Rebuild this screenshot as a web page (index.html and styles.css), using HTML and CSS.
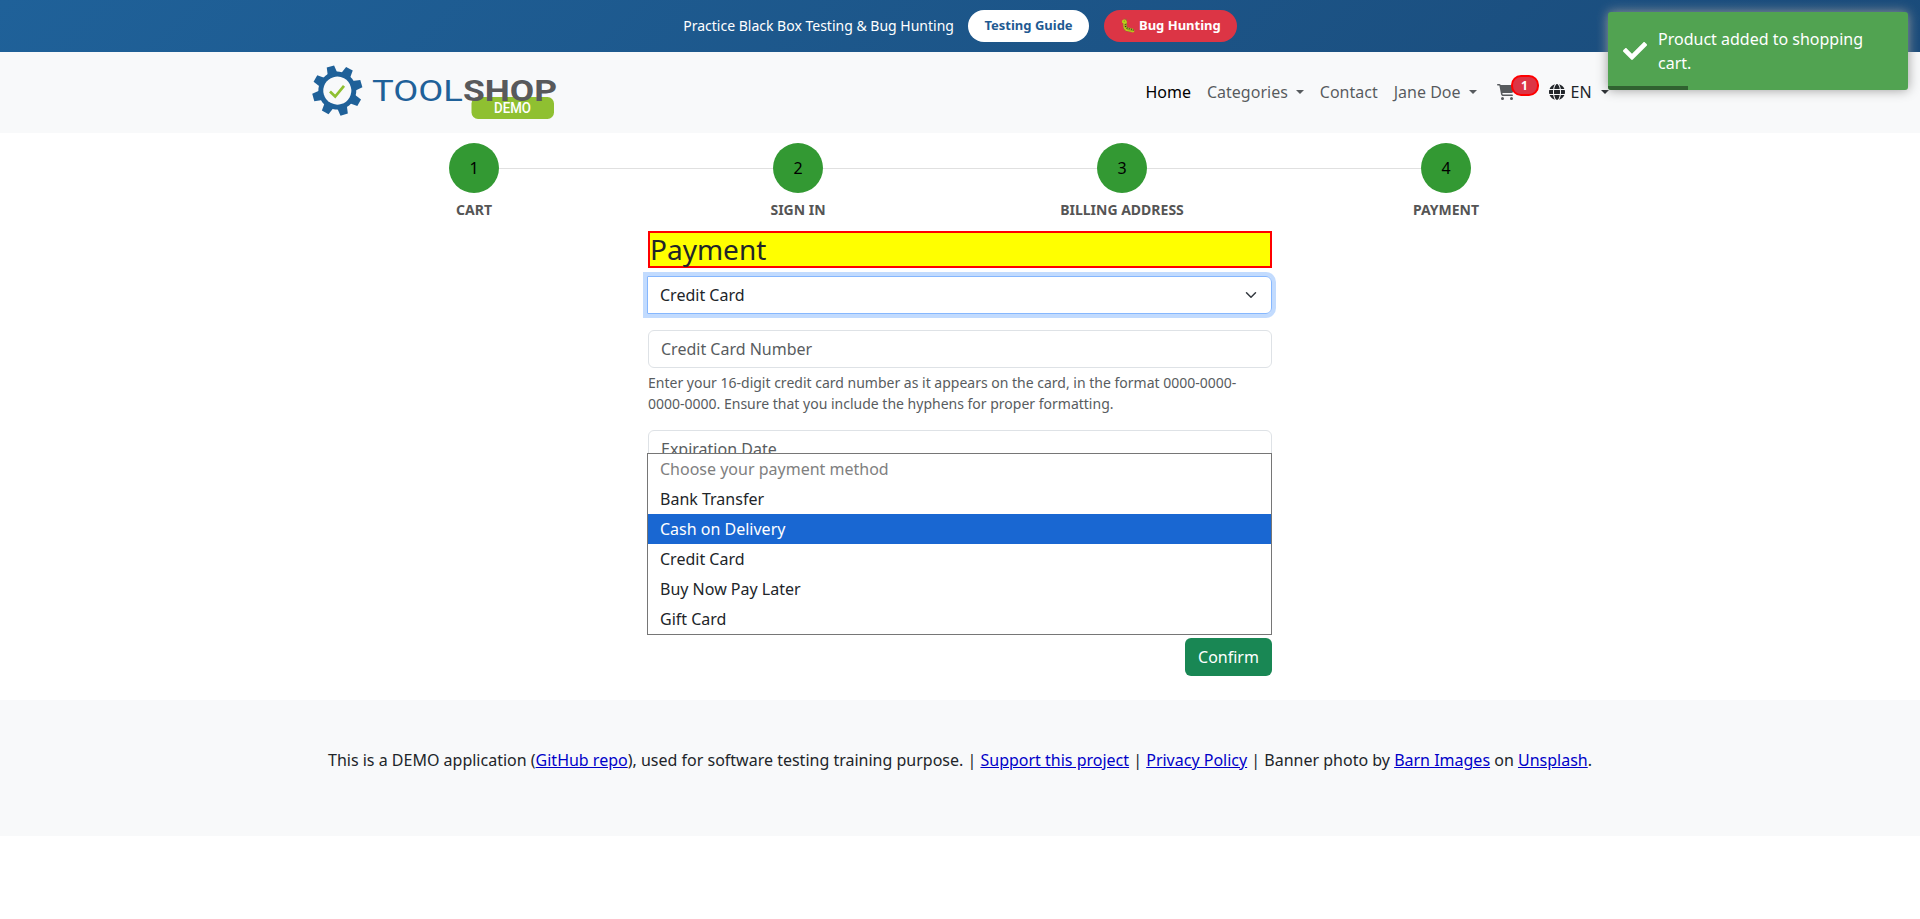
FILE: index.html
```html
<!DOCTYPE html>
<html lang="en">
<head>
<meta charset="utf-8">
<title>Toolshop - Payment</title>
<link rel="stylesheet" href="styles.css">
</head>
<body>
<div class="promo">
  <span>Practice Black Box Testing &amp; Bug Hunting</span>
  <a class="pill pill-light">Testing Guide</a>
  <a class="pill pill-red">🐛 Bug Hunting</a>
</div>

<header class="navbar">
  <div class="container nav-row">
    <svg class="logo" width="246" height="57" viewBox="0 0 246 57">
      <g transform="translate(25.300 26.600) rotate(-16)">
        <g fill="#1f6199">
          <circle r="19"/>
          <path d="M-5-17L-3.800-25H3.800L5-17Z"/>
          <path d="M-5-17L-3.800-25H3.800L5-17Z" transform="rotate(45)"/>
          <path d="M-5-17L-3.800-25H3.800L5-17Z" transform="rotate(90)"/>
          <path d="M-5-17L-3.800-25H3.800L5-17Z" transform="rotate(135)"/>
          <path d="M-5-17L-3.800-25H3.800L5-17Z" transform="rotate(180)"/>
          <path d="M-5-17L-3.800-25H3.800L5-17Z" transform="rotate(225)"/>
          <path d="M-5-17L-3.800-25H3.800L5-17Z" transform="rotate(270)"/>
          <path d="M-5-17L-3.800-25H3.800L5-17Z" transform="rotate(315)"/>
        </g>
        <circle r="14" fill="#f8f9fa"/>
      </g>
      <path d="M18 27.500l5.200 5L32 21.800" fill="none" stroke="#8fc031" stroke-width="2.700"/>
      <rect x="159.500" y="33" width="82.500" height="22" rx="6.500" fill="#8fc031"/>
      <text class="logo-tool" x="60" y="36.500" textLength="91" lengthAdjust="spacingAndGlyphs">TOOL</text>
      <text class="logo-shop" x="151" y="36.500" textLength="94" lengthAdjust="spacingAndGlyphs">SHOP</text>
      <text class="logo-demo" x="182" y="49" textLength="37" lengthAdjust="spacingAndGlyphs">DEMO</text>
    </svg>
    <nav class="menu">
      <a class="active">Home</a>
      <a class="drop">Categories</a>
      <a>Contact</a>
      <a class="drop">Jane Doe</a>
      <a class="cart">
        <svg width="18" height="16" viewBox="0 0 576 512" fill="currentColor"><path d="M0 24C0 10.700 10.700 0 24 0H69.500c22 0 41.500 12.800 50.600 32h411c26.300 0 45.500 25 38.600 50.400l-41 152.300c-8.500 31.400-37 53.300-69.500 53.300H170.700l5.400 28.500c2.200 11.300 12.100 19.500 23.600 19.500H488c13.300 0 24 10.700 24 24s-10.700 24-24 24H199.700c-34.600 0-64.300-24.600-70.700-58.500L77.400 54.500c-.7-3.800-4-6.500-7.900-6.500H24C10.700 48 0 37.300 0 24zM128 464a48 48 0 1 1 96 0 48 48 0 1 1-96 0zm336-48a48 48 0 1 1 0 96 48 48 0 1 1 0-96z"/></svg>
        <span class="badge">1</span>
      </a>
      <a class="lang drop">
        <svg width="16" height="16" viewBox="0 0 512 512" fill="currentColor"><path d="M352 256c0 22.200-1.200 43.600-3.300 64H163.300c-2.200-20.400-3.300-41.800-3.300-64s1.200-43.600 3.300-64H348.700c2.200 20.400 3.300 41.800 3.300 64zm28.800-64H503.900c5.300 20.500 8.100 41.900 8.100 64s-2.800 43.500-8.100 64H380.800c2.100-20.600 3.200-42 3.200-64s-1.100-43.400-3.200-64zm112.600-32H376.700c-10-63.900-29.800-117.400-55.300-151.600 78.300 20.700 142 77.500 171.900 151.600zm-149.100 0H167.700c6.100-36.400 15.500-68.600 27-94.700 10.500-23.600 22.200-40.700 33.500-51.500C239.400 3.200 248.700 0 256 0s16.600 3.200 27.800 13.800c11.300 10.800 23 27.900 33.500 51.500 11.600 26 20.900 58.200 27 94.700zm-209 0H18.600C48.600 85.900 112.200 29.100 190.600 8.400 165.100 42.600 145.300 96.100 135.300 160zM8.100 192H131.200c-2.100 20.600-3.200 42-3.200 64s1.100 43.400 3.200 64H8.100C2.800 299.500 0 278.100 0 256s2.800-43.500 8.100-64zM194.700 446.600c-11.600-26-20.900-58.200-27-94.600H344.300c-6.100 36.400-15.500 68.600-27 94.600-10.500 23.600-22.200 40.700-33.500 51.500C272.600 508.800 263.300 512 256 512s-16.600-3.200-27.800-13.800c-11.300-10.800-23-27.900-33.500-51.500zM135.300 352c10 63.900 29.800 117.400 55.300 151.600C112.200 482.900 48.600 426.100 18.600 352H135.300zm358.100 0c-30 74.100-93.600 130.900-171.900 151.600 25.500-34.200 45.200-87.700 55.300-151.600H493.400z"/></svg>
        <span>EN</span>
      </a>
    </nav>
  </div>
</header>

<main class="container">
  <ol class="steps">
    <li><span class="dot">1</span><span class="label">CART</span></li>
    <li><span class="dot">2</span><span class="label">SIGN IN</span></li>
    <li><span class="dot">3</span><span class="label">BILLING ADDRESS</span></li>
    <li><span class="dot">4</span><span class="label">PAYMENT</span></li>
  </ol>
  <section class="payment">
    <h1>Payment</h1>
    <div class="select">
      <span>Credit Card</span>
      <svg width="16" height="12" viewBox="0 0 16 16"><path d="m2 5 6 6 6-6" fill="none" stroke="#343a40" stroke-width="2" stroke-linecap="round" stroke-linejoin="round"/></svg>
      <ul class="options">
        <li class="disabled">Choose your payment method</li>
        <li>Bank Transfer</li>
        <li class="selected">Cash on Delivery</li>
        <li>Credit Card</li>
        <li>Buy Now Pay Later</li>
        <li>Gift Card</li>
      </ul>
    </div>
    <div class="input">Credit Card Number</div>
    <p class="help">Enter your 16-digit credit card number as it appears on the card, in the format 0000-0000-0000-0000. Ensure that you include the hyphens for proper formatting.</p>
    <div class="input">Expiration Date</div>
    <div class="actions"><button class="confirm">Confirm</button></div>
  </section>
</main>

<footer class="footer">
  <p>This is a DEMO application (<a>GitHub repo</a>), used for software testing training purpose. | <a>Support this project</a> | <a>Privacy Policy</a> | Banner photo by <a>Barn Images</a> on <a>Unsplash</a>.</p>
</footer>

<div class="toast">
  <svg width="24" height="24" viewBox="0 0 512 512" fill="#fff"><path d="M173.900 439.400l-166.400-166.400c-10-10-10-26.200 0-36.200l36.200-36.200c10-10 26.200-10 36.200 0L192 312.700 432.100 72.600c10-10 26.200-10 36.200 0l36.200 36.200c10 10 10 26.200 0 36.200l-294.400 294.400c-10 10-26.200 10-36.200 0z"/></svg>
  <span>Product added to shopping cart.</span>
  <i class="progress"></i>
</div>
</body>
</html>
```

FILE: styles.css
```css
* { box-sizing: border-box; }
body {
  margin: 0;
  background: #fff;
  color: #212529;
  font: 16px/24px "Noto Sans", "Liberation Sans", sans-serif;
}
ol, ul { list-style: none; margin: 0; padding: 0; }
.container { width: 1296px; margin: 0 auto; }

.promo {
  display: flex;
  justify-content: center;
  align-items: center;
  gap: 15px;
  height: 52px;
  background: linear-gradient(135deg, #1f6199 0%, #1a4b7a 100%);
  color: #fff;
  font-size: 14px;
}
.pill {
  height: 32px;
  padding: 0 16px;
  border-radius: 20px;
  font-size: 13px;
  font-weight: 700;
  line-height: 31px;
}
.pill-light { margin-left: -0.500px; background: #fff; color: #1f5a92; }
.pill-red { background: #dc3545; color: #fff; }

.navbar { height: 81px; background: #f8f9fa; }
.nav-row { display: flex; justify-content: space-between; height: 81px; }
.logo { margin-top: 12px; }
.logo-tool { font: 29px Roboto, sans-serif; fill: #1f6199; }
.logo-shop { font: bold 29px Roboto, sans-serif; fill: #58595b; }
.logo-demo { font: 500 14px Roboto, sans-serif; fill: #fff; }
.menu {
  display: flex;
  align-items: center;
  gap: 16px;
  height: 79px;
  margin-right: -0.600px;
  color: rgba(33, 37, 41, .75);
}
.menu .active { color: #000; }
.menu a { display: flex; align-items: center; position: relative; }
.drop::after {
  content: "";
  margin-left: 8px;
  border: 4.800px solid transparent;
  border-top-color: currentColor;
  border-bottom: 0;
}
.cart { width: 42px; height: 24px; margin-left: 4px; }
.badge {
  position: absolute;
  left: 14px;
  top: -5px;
  width: 28px;
  height: 21px;
  border: 2px solid red;
  border-radius: 10px;
  background: #dc3545;
  color: #fff;
  font-size: 12px;
  font-weight: 700;
  line-height: 17px;
  text-align: center;
}
.lang { gap: 6px; margin-left: -6px; color: #212529; }
.lang::after { margin-left: 3px; }

.steps { display: grid; grid-template-columns: repeat(4, 1fr); padding-top: 10px; }
.steps li { position: relative; display: flex; flex-direction: column; align-items: center; gap: 6px; }
.steps li:not(:last-child)::after {
  content: "";
  position: absolute;
  left: 50%;
  top: 25px;
  width: 100%;
  height: 1px;
  background: #e0e0e0;
}
.dot {
  position: relative;
  z-index: 1;
  width: 50px;
  height: 50px;
  border-radius: 50%;
  background: #393;
  color: #000;
  line-height: 50px;
  text-align: center;
}
.label { font-size: 14px; font-weight: 700; line-height: 21px; color: #555; }

.payment { width: 624px; margin: 11px auto 0; }
h1 {
  margin: 0 0 8px;
  border: 2px solid red;
  background: #ff0;
  font-size: 28px;
  font-weight: 400;
  line-height: 33px;
}
.select {
  position: relative;
  display: flex;
  align-items: center;
  justify-content: space-between;
  height: 38px;
  margin-left: -1px;
  margin-bottom: 16px;
  padding: 0 12px;
  border: 1px solid #86b7fe;
  border-radius: 0 6px 6px 0;
  box-shadow: 0 0 0 4px #c2dbfe;
}
.options {
  position: absolute;
  left: -1px;
  right: -1px;
  top: 176px;
  border: 1px solid #767676;
  background: #fff;
}
.options li { height: 30px; padding: 0 12px; line-height: 30px; }
.options .disabled { color: #808080; }
.options .selected { background: #1967d2; color: #fff; }
.input {
  height: 38px;
  padding: 6px 12px;
  border: 1px solid #dee2e6;
  border-radius: 6px;
  color: #585c60;
}
.help { margin: 4px 0 16px; color: #585c60; font-size: 14px; line-height: 21px; }
.actions { display: flex; justify-content: flex-end; margin-top: 170px; }
.confirm {
  width: 87px;
  height: 38px;
  border: 0;
  border-radius: 6px;
  background: #198754;
  color: #fff;
  font: inherit;
}

.footer { height: 136px; margin-top: 24px; padding-top: 48px; background: #f8f9fa; text-align: center; }
.footer p { margin: 0; }
.footer a { color: #0000c8; text-decoration: underline; }

.toast {
  position: absolute;
  top: 12px;
  right: 12px;
  display: flex;
  align-items: center;
  gap: 11px;
  width: 300px;
  height: 78px;
  padding: 0 15px;
  overflow: hidden;
  border-radius: 3px;
  background: #51a351;
  box-shadow: 0 0 12px #999;
  color: #fff;
}
.toast svg { flex: none; }
.progress { position: absolute; left: 0; bottom: 0; width: 80px; height: 4px; background: #306230; }
```
